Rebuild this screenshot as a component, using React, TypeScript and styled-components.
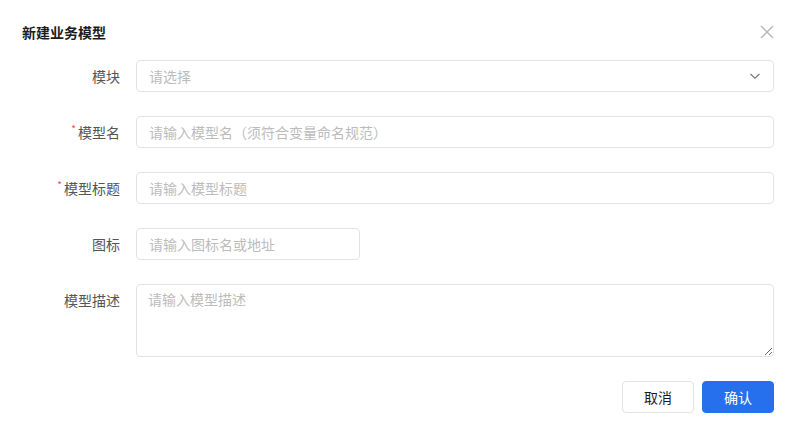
import React from "react";
import styled, { createGlobalStyle } from "styled-components";

const Global = createGlobalStyle`
  html, body { margin: 0; padding: 0; background: #fff; }
  body { font-family: "Noto Sans CJK SC", "Noto Sans", sans-serif; }
  * { box-sizing: border-box; }
`;

const Dialog = styled.div`
  width: 796px;
  height: 435px;
  background: #fff;
  padding: 20px 22px 0 22px;
  display: flex;
  flex-direction: column;
`;

const Header = styled.div`
  display: flex;
  align-items: center;
  justify-content: space-between;
  height: 24px;
  margin-bottom: 16px;
`;

const Title = styled.div`
  font-size: 14px;
  font-weight: 700;
  color: #1d1d1f;
  line-height: 24px;
`;

const CloseBtn = styled.button`
  border: none;
  background: none;
  padding: 0;
  width: 16px;
  height: 16px;
  margin-right: -1px;
  display: flex;
  align-items: center;
  justify-content: center;
  cursor: pointer;
`;

const Form = styled.div`
  display: flex;
  flex-direction: column;
  gap: 24px;
`;

const Row = styled.div`
  display: flex;
  align-items: flex-start;
  gap: 16px;
`;

const Label = styled.label`
  width: 98px;
  height: 32px;
  flex-shrink: 0;
  display: flex;
  align-items: center;
  justify-content: flex-end;
  font-size: 14px;
  color: #555;
  line-height: 20px;
  white-space: nowrap;
`;

const Star = styled.span`
  color: #f5483b;
  font-size: 10px;
  line-height: 10px;
  margin-right: 2px;
  align-self: center;
  transform: translateY(-3px);
`;

const Field = styled.div<{ $w?: number }>`
  ${(p) => (p.$w ? `width: ${p.$w}px;` : "flex: 1;")}
  height: 32px;
  border: 1px solid #e3e3e3;
  border-radius: 4px;
  display: flex;
  align-items: center;
  padding: 0 12px;
  font-size: 14px;
  color: #bcbcbc;
  justify-content: space-between;
`;

const Input = styled.input<{ $w?: number }>`
  ${(p) => (p.$w ? `width: ${p.$w}px;` : "flex: 1;")}
  height: 32px;
  border: 1px solid #e3e3e3;
  border-radius: 4px;
  padding: 0 12px;
  font-size: 14px;
  font-family: inherit;
  color: #333;
  outline: none;
  &::placeholder { color: #bcbcbc; }
`;

const TextArea = styled.textarea`
  flex: 1;
  height: 73px;
  border: 1px solid #e3e3e3;
  border-radius: 4px;
  padding: 3px 11px;
  font-size: 14px;
  font-family: inherit;
  line-height: 22px;
  color: #333;
  outline: none;
  resize: vertical;
  &::placeholder { color: #bcbcbc; }
`;

const Footer = styled.div`
  display: flex;
  justify-content: flex-end;
  gap: 8px;
  margin-top: 24px;
`;

const Button = styled.button<{ $primary?: boolean }>`
  width: 72px;
  height: 32px;
  border-radius: 4px;
  font-size: 14px;
  font-family: inherit;
  cursor: pointer;
  border: 1px solid ${(p) => (p.$primary ? "#2670ee" : "#e3e3e3")};
  background: ${(p) => (p.$primary ? "#2670ee" : "#fff")};
  color: ${(p) => (p.$primary ? "#fff" : "#1d1d1f")};
`;

export default function App() {
  return (
    <>
      <Global />
      <Dialog>
        <Header>
          <Title>新建业务模型</Title>
          <CloseBtn aria-label="close">
            <svg width="14" height="14" viewBox="0 0 14 14">
              <path d="M1 1L13 13M13 1L1 13" stroke="#b5b5b5" strokeWidth="1.3" />
            </svg>
          </CloseBtn>
        </Header>
        <Form>
          <Row>
            <Label>模块</Label>
            <Field>
              <span>请选择</span>
              <svg width="12" height="8" viewBox="0 0 12 8">
                <path d="M1.5 2L6 6.2L10.5 2" stroke="#777" strokeWidth="1.2" fill="none" />
              </svg>
            </Field>
          </Row>
          <Row>
            <Label><Star>*</Star>模型名</Label>
            <Input placeholder="请输入模型名（须符合变量命名规范）" />
          </Row>
          <Row>
            <Label><Star>*</Star>模型标题</Label>
            <Input placeholder="请输入模型标题" />
          </Row>
          <Row>
            <Label>图标</Label>
            <Input $w={224} placeholder="请输入图标名或地址" />
          </Row>
          <Row>
            <Label>模型描述</Label>
            <TextArea placeholder="请输入模型描述" />
          </Row>
        </Form>
        <Footer>
          <Button>取消</Button>
          <Button $primary>确认</Button>
        </Footer>
      </Dialog>
    </>
  );
}
